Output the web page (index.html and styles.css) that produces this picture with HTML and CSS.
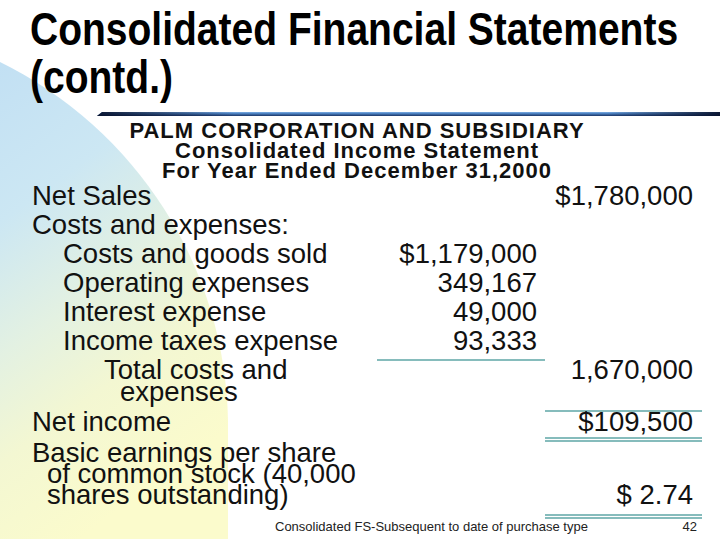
FILE: index.html
```html
<!DOCTYPE html>
<html>
<head>
<meta charset="utf-8">
<link rel="stylesheet" href="styles.css">
</head>
<body>
<div class="slide">
  <svg class="bg" width="240" height="539" viewBox="0 0 240 539" aria-hidden="true">
    <defs>
      <linearGradient id="bgGrad" x1="0" y1="0" x2="0.35" y2="1">
        <stop offset="0" stop-color="#c2e0f3"/>
        <stop offset="0.3" stop-color="#cce7f3"/>
        <stop offset="0.55" stop-color="#e3f1e2"/>
        <stop offset="0.75" stop-color="#f3f7d2"/>
        <stop offset="1" stop-color="#fbfbcc"/>
      </linearGradient>
    </defs>
    <path d="M0,62 A408,408 0 0 1 228,420 L228,539 L0,539 Z" fill="url(#bgGrad)"/>
  </svg>
  <div class="content">
    <h1 class="title"><span class="title-line">Consolidated Financial Statements</span><span class="title-line">(contd.)</span></h1>
    <div class="rule"></div>
    <div class="heading">
      <div>PALM CORPORATION AND SUBSIDIARY</div>
      <div>Consolidated Income Statement</div>
      <div>For Year Ended December 31,2000</div>
    </div>
    <div class="stmt">
      <div class="lbl">Net Sales</div><div class="amt"></div><div class="amt">$1,780,000</div>
      <div class="lbl">Costs and expenses:</div><div class="amt"></div><div class="amt"></div>
      <div class="lbl ind">Costs and goods sold</div><div class="amt">$1,179,000</div><div class="amt"></div>
      <div class="lbl ind">Operating expenses</div><div class="amt">349,167</div><div class="amt"></div>
      <div class="lbl ind">Interest expense</div><div class="amt">49,000</div><div class="amt"></div>
      <div class="lbl ind">Income taxes expense</div><div class="amt sub">93,333</div><div class="amt"></div>
      <div class="lbl multi total">Total costs and<br>expenses</div><div class="amt"></div><div class="amt">1,670,000</div>
      <div class="lbl">Net income</div><div class="amt"></div><div class="amt net">$109,500</div>
      <div class="lbl multi eps">Basic earnings per share<br>of common stock (40,000<br>shares outstanding)</div><div class="amt"></div><div class="amt last">$ 2.74</div>
    </div>
    <footer class="footer">
      <span>Consolidated FS-Subsequent to date of purchase type</span>
      <span>42</span>
    </footer>
  </div>
</div>
</body>
</html>
```

FILE: styles.css
```css
html, body {
  margin: 0;
  padding: 0;
  background: #ffffff;
}

.slide {
  position: relative;
  width: 720px;
  height: 539px;
  overflow: hidden;
  background: #ffffff;
  font-family: "Liberation Sans", Arial, sans-serif;
  color: #111111;
}

.bg {
  position: absolute;
  left: 0;
  top: 0;
  z-index: 0;
}

.content {
  position: relative;
  z-index: 1;
  height: 539px;
  display: flex;
  flex-direction: column;
}

.title {
  margin: 0;
  padding: 5px 0 0 30px;
  font-family: "Liberation Sans", Arial, sans-serif;
  font-weight: bold;
  font-size: 47px;
  line-height: 48px;
  color: #000000;
  white-space: nowrap;
}

.title-line {
  display: block;
  transform: scaleX(0.83);
  transform-origin: left center;
}

.rule {
  margin: 11px 0 0 97px;
  height: 5px;
  background:
    linear-gradient(to right, rgba(8, 18, 45, 0.95) 0%, rgba(8, 18, 45, 0) 22%, rgba(8, 18, 45, 0) 82%, rgba(8, 18, 45, 0.95) 100%),
    linear-gradient(to bottom, #7fb0e4 0%, #4a7fbf 40%, #1c3566 100%);
  clip-path: polygon(5px 0, 100% 0, 100% 100%, 0 100%);
}

.heading {
  margin-top: 5px;
  padding-right: 6px;
  text-align: center;
  font-weight: bold;
  font-size: 22px;
  line-height: 20px;
  letter-spacing: 1px;
  color: #111111;
}

.stmt {
  display: grid;
  grid-template-columns: 345px 168px 157px;
  margin-left: 32px;
  align-items: baseline;
  font-size: 27.5px;
  line-height: 29px;
}

.lbl {
  white-space: nowrap;
}

.ind {
  padding-left: 31px;
}

.multi {
  line-height: 22px;
  padding-bottom: 4px;
}

.total {
  padding-left: 88px;
  text-indent: -16px;
}

.eps {
  align-self: last baseline;
  line-height: 21px;
  padding-left: 15px;
  text-indent: -15px;
}

.amt {
  text-align: right;
  padding-right: 8px;
  white-space: nowrap;
}

.amt:nth-child(3n) {
  padding-right: 9px;
}

.sub {
  padding-bottom: 4px;
  border-bottom: 2px solid #86bcbc;
  margin-bottom: -6px;
}

.net {
  border-top: 2px solid #86bcbc;
  line-height: 19px;
  padding-bottom: 6px;
  border-bottom: 5px double #86bcbc;
}

.last {
  align-self: last baseline;
  padding-bottom: 5px;
  border-bottom: 5px double #86bcbc;
}

.footer {
  margin-top: auto;
  padding: 0 23px 5px 275px;
  display: flex;
  justify-content: space-between;
  font-size: 13px;
  line-height: 15px;
  color: #222222;
}
```
